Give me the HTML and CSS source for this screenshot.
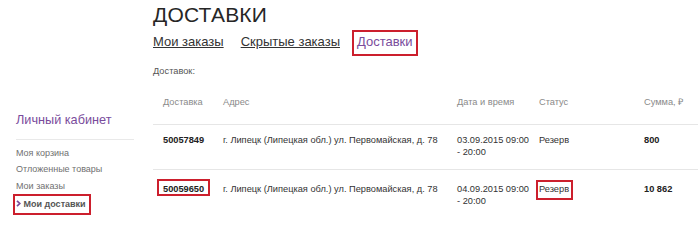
FILE: index.html
```html
<!DOCTYPE html>
<html lang="ru">
<head>
<meta charset="utf-8">
<title>Доставки</title>
<link rel="stylesheet" href="styles.css">
</head>
<body>
<div class="page">
  <aside class="sidebar">
    <h2 class="sidebar-title">Личный кабинет</h2>
    <ul class="side-menu">
      <li class="side-item"><a href="#">Моя корзина</a></li>
      <li class="side-item"><a href="#">Отложенные товары</a></li>
      <li class="side-item"><a href="#">Мои заказы</a></li>
      <li class="side-item"><a href="#" class="side-active"><svg class="chev" width="5" height="7" viewBox="0 0 5 7"><polyline points="1,0.8 3.8,3.5 1,6.2" fill="none" stroke="#7a4c9c" stroke-width="1.7"/></svg> Мои доставки</a></li>
    </ul>
  </aside>
  <main class="main">
    <h1 class="title">ДОСТАВКИ</h1>
    <nav class="tabs">
      <a href="#" class="tab">Мои заказы</a>
      <a href="#" class="tab">Скрытые заказы</a>
      <a href="#" class="tab tab-active">Доставки</a>
    </nav>
    <p class="count">Доставок:</p>
    <table class="deliveries">
      <colgroup>
        <col class="c-num">
        <col class="c-addr">
        <col class="c-date">
        <col class="c-status">
        <col class="c-sum">
      </colgroup>
      <thead>
        <tr>
          <th>Доставка</th>
          <th>Адрес</th>
          <th>Дата и время</th>
          <th>Статус</th>
          <th>Сумма, ₽</th>
        </tr>
      </thead>
      <tbody>
        <tr>
          <td class="num">50057849</td>
          <td class="addr">г. Липецк (Липецкая обл.) ул. Первомайская, д. 78</td>
          <td><div class="date">03.09.2015 09:00 - 20:00</div></td>
          <td>Резерв</td>
          <td class="num">800</td>
        </tr>
        <tr>
          <td class="num"><span class="mark mark-num">50059650</span></td>
          <td class="addr">г. Липецк (Липецкая обл.) ул. Первомайская, д. 78</td>
          <td><div class="date">04.09.2015 09:00 - 20:00</div></td>
          <td><span class="mark mark-status">Резерв</span></td>
          <td class="num">10 862</td>
        </tr>
      </tbody>
    </table>
  </main>
</div>
</body>
</html>
```

FILE: styles.css
```css
html, body {
  margin: 0;
  padding: 0;
  background: #ffffff;
}

body {
  font-family: "Liberation Sans", Arial, sans-serif;
  color: #333333;
}

.page {
  display: flex;
  width: 698px;
  height: 219px;
  overflow: hidden;
}

/* Sidebar */
.sidebar {
  flex: 0 0 153px;
  box-sizing: border-box;
  padding: 112px 19px 0 16px;
}

.sidebar-title {
  margin: 0;
  font-size: 12.7px;
  line-height: 16px;
  font-weight: normal;
  color: #7a4c9c;
  padding-bottom: 11px;
  border-bottom: 1px solid #e9e9e9;
}

.side-menu {
  list-style: none;
  margin: 4.5px 0 0;
  padding: 0;
}

.side-item {
  font-size: 9px;
  line-height: 16.5px;
}

.side-item a {
  color: #707070;
  text-decoration: none;
}

.side-item a.side-active {
  display: inline-block;
  margin-left: -3px;
  padding: 0 3px 0 1px;
  border: 2px solid #cc1f2d;
  color: #555555;
  font-weight: bold;
}

.chev {
  vertical-align: 0;
}

/* Main */
.main {
  flex: 1 1 auto;
  min-width: 0;
}

.title {
  margin: 3px 0 0;
  font-size: 21px;
  line-height: 24px;
  font-weight: normal;
  color: #262626;
  letter-spacing: 0.2px;
}

.tabs {
  display: flex;
  gap: 7px;
  margin: 3px 0 0 -5px;
}

.tab {
  display: inline-block;
  font-size: 13px;
  line-height: 16px;
  padding: 2px 3px 4px;
  border: 2px solid transparent;
  color: #333333;
  text-decoration: underline;
  text-underline-offset: 1px;
}

.tab-active {
  border-color: #cc1f2d;
  color: #7a4c9c;
  text-decoration: none;
}

.count {
  margin: 9px 0 0;
  font-size: 9.25px;
  line-height: 12px;
  color: #555555;
}

/* Table */
.deliveries {
  width: 100%;
  margin-top: 9px;
  border-collapse: collapse;
  table-layout: fixed;
  font-size: 9.25px;
  line-height: 12px;
}

.c-num { width: 60px; }
.c-addr { width: 234px; }
.c-date { width: 82px; }
.c-status { width: 105px; }

.deliveries th {
  text-align: left;
  font-weight: normal;
  color: #8a8a8a;
  padding: 10px 10px 16px;
  border-bottom: 1px solid #e6e6e6;
  white-space: nowrap;
}

.deliveries td {
  text-align: left;
  vertical-align: baseline;
  padding: 9px 10px 11px;
  color: #333333;
}

.deliveries td.addr {
  padding-right: 0;
  white-space: nowrap;
}

.deliveries tbody tr + tr td {
  border-top: 1px solid #e6e6e6;
}

.deliveries td.num {
  font-weight: bold;
  color: #222222;
}

.date {
  width: 75px;
}

.mark {
  display: inline-block;
  border: 2px solid #cc1f2d;
}

.mark-num {
  margin-left: -6px;
  padding: 3px 4px 0;
  line-height: 10px;
}

.mark-status {
  margin-left: -3px;
  padding: 2px 2px 3px 1px;
  line-height: 11px;
}
```
